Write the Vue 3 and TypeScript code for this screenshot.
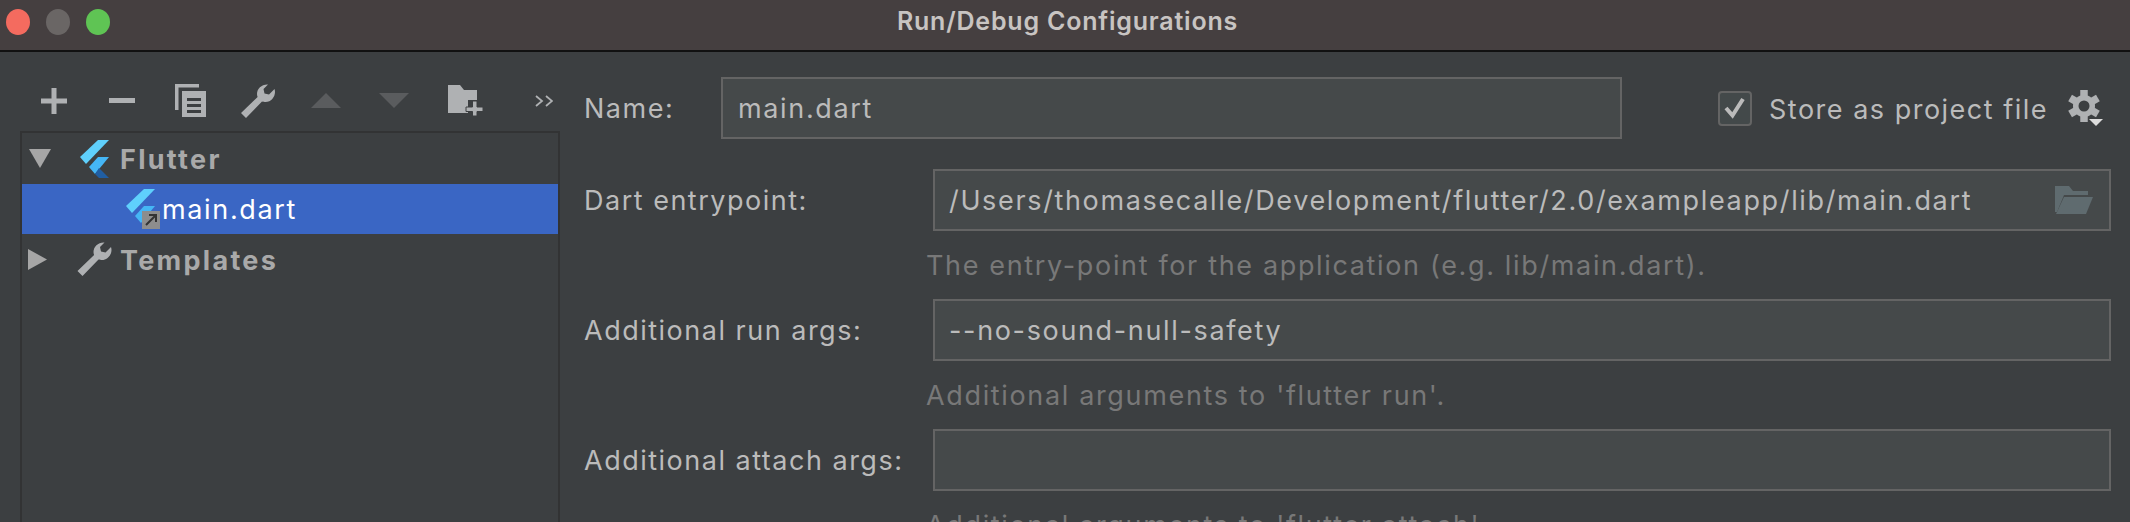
<script setup lang="ts">
const hints = {
  entry: 'The entry-point for the application (e.g. lib/main.dart).',
  run: "Additional arguments to 'flutter run'.",
  attach: "Additional arguments to 'flutter attach'.",
}
</script>

<template>
  <div class="window">
    <header class="titlebar">
      <div class="lights">
        <span class="light red"></span>
        <span class="light grey"></span>
        <span class="light green"></span>
      </div>
      <span class="title">Run/Debug Configurations</span>
    </header>
    <div class="body">
      <aside class="left">
        <div class="toolbar">
          <span class="tool">
            <svg width="26" height="26" viewBox="0 0 26 26"><path d="M10.5 0h5v10.5H26v5H15.5V26h-5V15.5H0v-5h10.5z" fill="#afb1b3"/></svg>
          </span>
          <span class="tool">
            <svg width="26" height="5" viewBox="0 0 26 5"><rect width="26" height="5" fill="#afb1b3"/></svg>
          </span>
          <span class="tool">
            <svg width="31" height="33" viewBox="0 0 31 33">
              <path d="M0 0h24v3.500H3.500V26H0z" fill="#afb1b3"/>
              <path d="M7 7h24v26H7z" fill="#afb1b3"/>
              <path d="M12 14h14v3H12zM12 20h14v3H12zM12 26h14v3H12z" fill="#3c3f41"/>
            </svg>
          </span>
          <span class="tool">
            <svg width="34" height="34" viewBox="0 0 34 34"><path d="M27 .5C21 0 16 4.500 16 10c0 1 .2 2 .6 3L0 29l5 5 16-16.400c1 .4 2.500.4 3.500.4C30 18 34 13 34 8c0-1-.2-2-.5-3L28 10.500 23.500 9.500 22.500 5z" fill="#afb1b3"/></svg>
          </span>
          <span class="tool">
            <svg width="30" height="15" viewBox="0 0 30 15"><path d="M15 0l15 15H0z" fill="#5a5c5e"/></svg>
          </span>
          <span class="tool">
            <svg width="30" height="15" viewBox="0 0 30 15"><path d="M0 0h30L15 15z" fill="#5a5c5e"/></svg>
          </span>
          <span class="tool folder-tool">
            <svg width="35" height="31" viewBox="0 0 35 31">
              <path d="M0 0h12l4 5h13v23H0z" fill="#afb1b3"/>
              <path d="M20 15h10v16H20z" fill="#3c3f41"/>
              <path d="M24.500 16h4.500v6h6v4.500h-6V31h-4.500v-4.500H18V22h6.500z" fill="#afb1b3" stroke="#3c3f41" stroke-width="1"/>
            </svg>
          </span>
          <span class="tool more">
            <svg width="18" height="12" viewBox="0 0 18 12"><path d="M1 1l6 5-6 5M11 1l6 5-6 5" fill="none" stroke="#afb1b3" stroke-width="1.800"/></svg>
          </span>
        </div>
        <div class="tree">
          <div class="row group">
            <svg class="arrow" width="22" height="19" viewBox="0 0 22 19"><path d="M0 0h22L11 19z" fill="#a6a6a6"/></svg>
            <svg class="logo" width="29" height="38" viewBox="0 0 29 38">
              <path d="M18 0h11L6 24l-6-7z" fill="#5fd0fc"/>
              <path d="M18 17h11L15 34 9 27z" fill="#45b6f5"/>
              <path d="M19 28l10 10H19l-4-4z" fill="#205ea3"/>
            </svg>
            <span class="name">Flutter</span>
          </div>
          <div class="row selected">
            <span class="config-icon">
              <svg width="29" height="36" viewBox="0 0 29 36">
                <path d="M18 0h11L6 24l-6-7z" fill="#5fd0fc"/>
                <path d="M18 17h11L15 34 9 27z" fill="#45b6f5"/>
              </svg>
              <svg class="badge" width="18" height="18" viewBox="0 0 18 18">
                <rect width="18" height="18" fill="#8d8d8d"/>
                <path d="M7 4h7v7M14 4L4 14" fill="none" stroke="#333" stroke-width="2"/>
              </svg>
            </span>
            <span class="config-name">main.dart</span>
          </div>
          <div class="row group">
            <svg class="arrow right" width="19" height="21" viewBox="0 0 19 21"><path d="M0 0l19 10.500L0 21z" fill="#a6a6a6"/></svg>
            <svg class="logo wrench" width="35" height="34" viewBox="0 0 34 34"><path d="M27 .5C21 0 16 4.500 16 10c0 1 .2 2 .6 3L0 29l5 5 16-16.400c1 .4 2.500.4 3.500.4C30 18 34 13 34 8c0-1-.2-2-.5-3L28 10.500 23.500 9.500 22.500 5z" fill="#afb1b3"/></svg>
            <span class="name templates">Templates</span>
          </div>
        </div>
      </aside>
      <main class="form">
        <div class="name-row">
          <label class="label name-label">Name:</label>
          <div class="field name-field">main.dart</div>
          <span class="check">
            <svg width="24" height="22" viewBox="0 0 24 22"><path d="M3 11l6.500 7.500L20 2" fill="none" stroke="#bbbbbb" stroke-width="4"/></svg>
          </span>
          <span class="store">Store as project file</span>
          <span class="gear">
            <svg width="40" height="40" viewBox="0 0 40 40">
              <g stroke="#afb1b3" stroke-width="7.500">
                <path d="M16 0v32"/>
                <path d="M2.100 8l27.800 16"/>
                <path d="M2.100 24L29.900 8"/>
              </g>
              <circle cx="16" cy="16" r="11" fill="#afb1b3"/>
              <circle cx="16" cy="16" r="5.500" fill="#3c3f41"/>
              <path d="M21 29h14l-7 7z" fill="#dddddd"/>
            </svg>
          </span>
        </div>
        <div class="row-field first">
          <label class="label">Dart entrypoint:</label>
          <div class="field grow">
            <span>/Users/thomasecalle/Development/flutter/2.0/exampleapp/lib/main.dart</span>
            <svg class="folder" width="38" height="28" viewBox="0 0 38 28">
              <path d="M0 0h14l4 5h15v4H9L2 26H0z" fill="#5f6b6f"/>
              <path d="M9 11h29l-7 17H1z" fill="#5f6b6f"/>
            </svg>
          </div>
        </div>
        <div class="hint">{{ hints.entry }}</div>
        <div class="row-field">
          <label class="label">Additional run args:</label>
          <div class="field grow">--no-sound-null-safety</div>
        </div>
        <div class="hint">{{ hints.run }}</div>
        <div class="row-field">
          <label class="label">Additional attach args:</label>
          <div class="field grow"></div>
        </div>
        <div class="hint">{{ hints.attach }}</div>
      </main>
    </div>
  </div>
</template>

<style>
html, body { margin: 0; background: #3c3f41; overflow: hidden; }
</style>

<style scoped>
.window {
  width: 2130px;
  height: 522px;
  overflow: hidden;
  background: #3c3f41;
  font-family: Inter, "Liberation Sans", sans-serif;
  font-size: 27px;
  letter-spacing: 1.65px;
  color: #bbbbbb;
  display: flex;
  flex-direction: column;
}
.titlebar {
  height: 50px;
  flex: none;
  background: #453f40;
  border-bottom: 2px solid #111111;
  box-sizing: content-box;
  display: flex;
  align-items: center;
  justify-content: center;
  position: relative;
}
.title {
  font-size: 25px;
  font-weight: 600;
  letter-spacing: 0.8px;
  color: #c8c4c2;
  margin-top: -8px;
  padding-left: 5px;
}
.lights {
  position: absolute;
  left: 6px;
  top: 9px;
  display: flex;
  gap: 16px;
}
.light { width: 24px; height: 26px; border-radius: 50%; }
.red { background: #f46b5f; }
.grey { background: #6a6665; }
.green { background: #5fc454; }
.body { flex: 1; display: flex; min-height: 0; }
.left { width: 570px; flex: none; padding-left: 20px; padding-right: 10px; box-sizing: border-box; display: flex; flex-direction: column; }
.toolbar { height: 78px; display: flex; align-items: center; flex: none; margin-top: 1px; padding-top: 17px; box-sizing: border-box; }
.tool { width: 68px; height: 40px; flex: none; display: flex; align-items: center; justify-content: center; }
.folder-tool { margin-left: 3px; }
.more { margin-left: 20px; width: 50px; }
.tree {
  flex: 1;
  border: 2px solid #323334;
  border-bottom: none;
  height: 400px;
}
.row { height: 50px; display: flex; align-items: center; position: relative; }
.group { font-weight: 700; color: #a9a9a9; letter-spacing: 2.3px; }
.arrow { margin-left: 7px; flex: none; }
.arrow.right { margin-left: 6px; }
.logo { margin-left: 29px; flex: none; }
.wrench { margin-left: 30px; }
.name { margin-left: 11px; padding-top: 2px; }
.templates { margin-left: 8px; }
.group:first-child { height: 51px; }
.selected { background: #3a66c4; color: #ffffff; }
.config-icon { margin-left: 104px; width: 36px; height: 40px; position: relative; flex: none; display: block; padding-top: 0; }
.badge { position: absolute; left: 16px; top: 22px; }
.config-name { letter-spacing: 1.65px; }
.form { flex: 1; padding: 25px 19px 0 14px; min-width: 0; }
.name-row { display: flex; align-items: center; height: 62px; }
.label { white-space: nowrap; letter-spacing: 1.5px; }
.name-label { width: 137px; flex: none; }
.field {
  height: 62px;
  box-sizing: border-box;
  background: #45494a;
  border: 2px solid #646464;
  padding-left: 15px;
  display: flex;
  align-items: center;
  white-space: nowrap;
}
.name-field { width: 901px; flex: none; }
.check {
  width: 34px;
  height: 35px;
  margin-left: 96px;
  box-sizing: border-box;
  border: 2px solid #646464;
  border-radius: 4px;
  background: #43494a;
  display: flex;
  align-items: center;
  justify-content: center;
  flex: none;
}
.store { margin-left: 17px; white-space: nowrap; padding-top: 2px; letter-spacing: 1.5px; }
.gear { margin-left: 20px; flex: none; display: flex; align-items: center; padding-top: 3px; }
.row-field { display: flex; align-items: center; height: 62px; }
.row-field.first { margin-top: 30px; }
.row-field .label { width: 349px; flex: none; }
.grow { flex: 1; min-width: 0; justify-content: space-between; padding-left: 14px; padding-right: 16px; }
.hint {
  height: 68px;
  display: flex;
  align-items: center;
  margin-left: 342px;
  color: #787878;
  white-space: nowrap;
}
</style>
